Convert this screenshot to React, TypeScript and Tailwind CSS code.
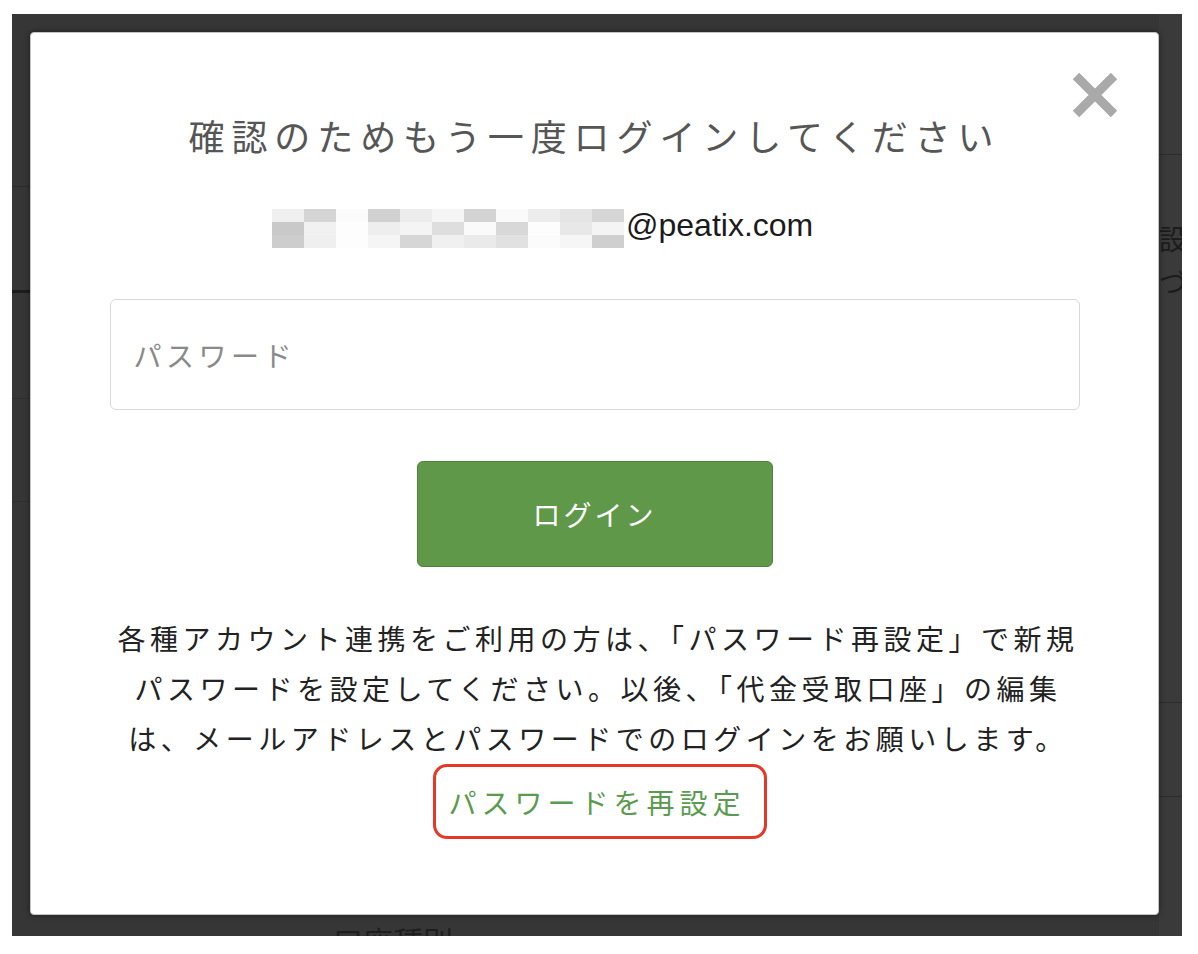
const JP = "font-['Noto_Sans_CJK_JP','Noto_Sans',sans-serif]";

const mosaic: string[][] = [
  ['#efefef', '#d5d5d5', '#fbfbfb', '#d1d1d1', '#ececec', '#f5f5f5', '#d3d3d3', '#fafafa', '#ececec', '#e5e5e5', '#d6d6d6'],
  ['#c9c9c9', '#f1f1f1', '#fdfdfd', '#eeeeee', '#f4f4f4', '#dedede', '#fafafa', '#d8d8d8', '#fdfdfd', '#e8e8e8', '#f4f4f4'],
  ['#cdcdcd', '#efefef', '#fdfdfd', '#f5f5f5', '#d6d6d6', '#f0f0f0', '#eaeaea', '#e1e1e1', '#fbfbfb', '#f6f6f6', '#cfcfcf'],
];

function CloseIcon() {
  return (
    <svg width="48" height="48" viewBox="0 0 48 48" aria-hidden="true">
      <path d="M5 5 L43 43 M43 5 L5 43" stroke="#a9a9a9" strokeWidth="9" strokeLinecap="butt" fill="none" />
    </svg>
  );
}

export default function App() {
  return (
    <div className="w-[1198px] min-h-[954px] bg-white pt-[14px] pl-[12px]">
      <div className="relative w-[1170px] h-[922px] bg-[#363636] overflow-hidden">
        {/* page behind the overlay (dimmed) */}
        <div className="flex h-full">
          <div className="w-[18px] flex flex-col">
            <div className="h-[173px] border-b border-[#2c2c2c]" />
            <div className="h-[106px] border-b-[3px] border-[#1c1c1c]" />
            <div className="h-[106px] border-b border-[#2e2e2e]" />
            <div className="h-[103px] border-b border-[#2e2e2e]" />
          </div>
          <div className="flex-1 flex flex-col">
            <div className="h-[906px] shrink-0" />
            <div className={`${JP} pl-[303px] text-[30px] leading-[40px] text-[#1e1e1e] whitespace-nowrap`}>口座種別</div>
          </div>
          <div className="w-[23px] flex flex-col bg-[#3a3a3a]">
            <div className="h-[141px] border-b border-[#2c2c2c]" />
            <div className={`${JP} pt-[62px] h-[548px] border-b border-[#2c2c2c] text-[28px] leading-[43px] text-[#1c1c1c] whitespace-nowrap`}>
              <div>設</div>
              <div>づ</div>
            </div>
            <div className="h-[94px] border-b border-[#2c2c2c]" />
          </div>
        </div>

        {/* modal */}
        <div className="absolute left-[18px] top-[18px] w-[1129px] h-[883px] bg-white rounded-[4px] border border-[#c4c4c4] shadow-[0_0_6px_rgba(0,0,0,0.45)] flex flex-col items-center">
          <button className="absolute top-[38px] right-[39px] w-[48px] h-[48px] flex items-center justify-center" aria-label="close">
            <CloseIcon />
          </button>

          <h2 className={`${JP} mt-[75px] text-[36px] leading-[54px] tracking-[6.9px] text-[#565656] font-normal whitespace-nowrap text-center`}>
            確認のためもう一度ログインしてください
          </h2>

          <div className="mt-[39px] self-start ml-[241px] flex items-start h-[48px]">
            <div className="mt-[8px] flex flex-col">
              {mosaic.map((row, r) => (
                <div key={r} className={`flex ${r === 2 ? 'h-[13px]' : 'h-[13px]'}`}>
                  {row.map((c, i) => (
                    <div key={i} className="w-[32px] h-full" style={{ backgroundColor: c }} />
                  ))}
                </div>
              ))}
            </div>
            <span className="ml-[2px] font-['Liberation_Sans',Arial,sans-serif] text-[32px] leading-[48px] text-[#1b1b1b]">@peatix.com</span>
          </div>

          <input
            type="password"
            placeholder="パスワード"
            className={`${JP} mt-[50px] w-[970px] h-[111px] rounded-[6px] border border-[#d9d9d9] bg-white pl-[23px] text-[28px] tracking-[4.5px] text-[#222] placeholder:text-[#8a8a8a] outline-none`}
          />

          <button className={`${JP} mt-[51px] w-[356px] h-[106px] rounded-[6px] bg-[#60984a] border border-[#4e843a] text-white text-[28px] tracking-[3px] flex items-center justify-center`}>
            ログイン
          </button>

          <p className={`${JP} mt-[46px] pl-[7px] text-[28px] leading-[50px] tracking-[4.5px] text-[#222] text-center whitespace-nowrap`}>
            各種アカウント連携をご利用の方は、「パスワード再設定」で新規
            <br />
            パスワードを設定してください。以後、「代金受取口座」の編集
            <br />
            は、メールアドレスとパスワードでのログインをお願いします。
          </p>

          <a
            href="#"
            className={`${JP} ml-[10px] mt-[1px] w-[334px] h-[75px] rounded-[14px] border-[3px] border-[#e5382a] flex items-center pl-[13px] text-[28px] tracking-[5px] text-[#5b9b4f] whitespace-nowrap`}
          >
            パスワードを再設定
          </a>
        </div>
      </div>
    </div>
  );
}
